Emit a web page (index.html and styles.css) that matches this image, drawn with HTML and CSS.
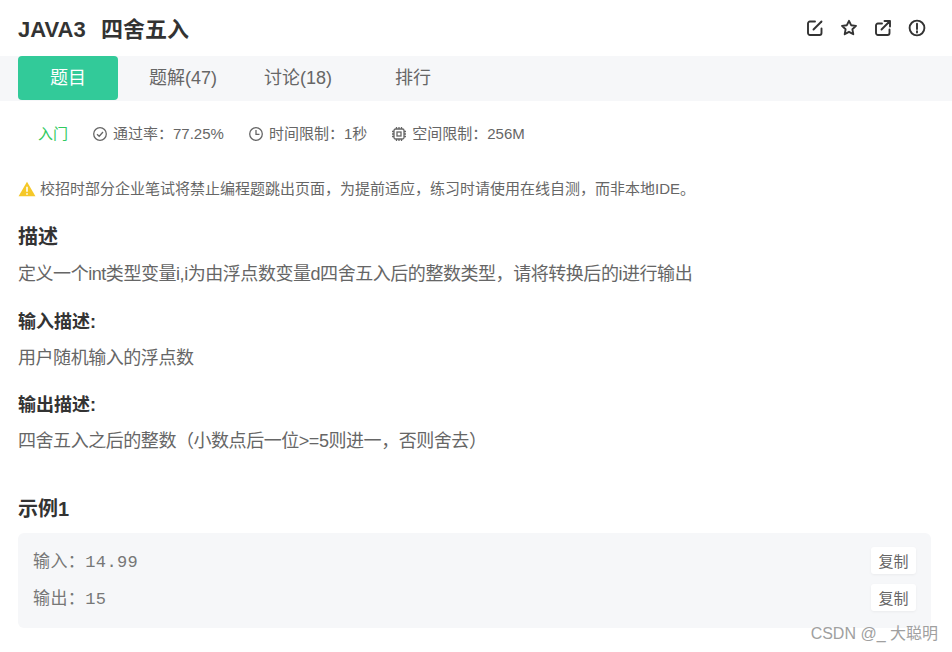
FILE: index.html
```html
<!DOCTYPE html>
<html lang="zh">
<head>
<meta charset="utf-8">
<title>JAVA3 四舍五入</title>
<link rel="stylesheet" href="styles.css">
</head>
<body>
<div class="page">
  <header class="head">
    <h1 class="title">JAVA3&nbsp; 四舍五入</h1>
    <div class="actions">
      <svg class="act" viewBox="0 0 18 18"><path d="M15.5 9.5v4.6a1.9 1.9 0 0 1-1.9 1.9H3.9A1.9 1.9 0 0 1 2 14.100V4.400A1.900 1.900 0 0 1 3.900 2.500H9"/><path d="M7.500 10.500 15.500 2.500"/></svg>
      <svg class="act" viewBox="0 0 18 18"><path d="M9 1.800 11.100 6.200 16 6.900 12.400 10.300 13.300 15.200 9 12.800 4.700 15.200 5.600 10.300 2 6.900 6.900 6.200Z"/></svg>
      <svg class="act" viewBox="0 0 18 18"><path d="M15.500 10.500v3.600a1.900 1.900 0 0 1-1.900 1.900H3.900A1.900 1.900 0 0 1 2 14.100V6.400A1.900 1.900 0 0 1 3.900 4.500H8"/><path d="M7.500 10.500 15.500 2.500M10.500 2H16V7.500"/></svg>
      <svg class="act" viewBox="0 0 18 18"><circle cx="9" cy="9" r="7.400"/><path d="M9 4.700V10M9 12.100V13.500"/></svg>
    </div>
  </header>
  <nav class="tabs">
    <a class="tab tab-on">题目</a>
    <a class="tab">题解(47)</a>
    <a class="tab">讨论(18)</a>
    <a class="tab">排行</a>
  </nav>
  <div class="meta">
    <span class="level">入门</span>
    <span class="stat">
      <svg class="ico" viewBox="0 0 16 16"><circle cx="8" cy="8" r="6.300"/><path d="M5 8.200 7.200 10.300 11 6"/></svg>通过率：77.25%
    </span>
    <span class="stat">
      <svg class="ico" viewBox="0 0 16 16"><circle cx="8" cy="8" r="6.300"/><path d="M8 4V8.300H11.500"/></svg>时间限制：1秒
    </span>
    <span class="stat">
      <svg class="ico" viewBox="0 0 16 16"><rect x="3" y="3" width="10" height="10" rx="1.500"/><rect x="6" y="6" width="4" height="4"/><path d="M5.500 1V3M8 1V3M10.500 1V3M5.500 13V15M8 13V15M10.500 13V15M1 5.500H3M1 8H3M1 10.500H3M13 5.500H15M13 8H15M13 10.500H15"/></svg>空间限制：256M
    </span>
  </div>
  <p class="notice">
    <svg class="warn" viewBox="0 0 16 16"><path d="M8 1.500 15.500 14.500H.5Z" fill="#f5c828"/><path d="M8 6V10.500M8 11.800V13.200" stroke="#fff" stroke-width="1.400"/></svg>校招时部分企业笔试将禁止编程题跳出页面，为提前适应，练习时请使用在线自测，而非本地IDE。
  </p>
  <h2 class="h-main">描述</h2>
  <p class="body">定义一个int类型变量i,i为由浮点数变量d四舍五入后的整数类型，请将转换后的i进行输出</p>
  <h3 class="h-sub">输入描述:</h3>
  <p class="body">用户随机输入的浮点数</p>
  <h3 class="h-sub">输出描述:</h3>
  <p class="body">四舍五入之后的整数（小数点后一位&gt;=5则进一，否则舍去）</p>
  <h2 class="h-example">示例1</h2>
  <div class="example">
    <div class="row"><span class="io">输入：14.99</span><button class="copy">复制</button></div>
    <div class="row"><span class="io">输出：15</span><button class="copy">复制</button></div>
  </div>
  <div class="mark">CSDN @_ 大聪明</div>
</div>
</body>
</html>
```
FILE: styles.css
```css
* { box-sizing: border-box; }
html, body { margin: 0; padding: 0; background: #fff; }
body {
  width: 952px;
  height: 652px;
  overflow: hidden;
  font-family: "Liberation Sans", "Noto Sans CJK SC", sans-serif;
  color: #666;
}
.page { position: relative; height: 652px; }
.head {
  height: 56px;
  padding: 0 26px 0 18px;
  display: flex;
  align-items: center;
  justify-content: space-between;
}
.title { margin: 4px 0 0; font-size: 22px; line-height: 28px; font-weight: 700; color: #333; word-spacing: 1.500px; }
.actions { display: flex; gap: 16px; }
.act { width: 18px; height: 18px; fill: none; stroke: #333; stroke-width: 1.900; stroke-linecap: round; stroke-linejoin: round; }
.tabs { height: 45px; padding: 0 18px; background: #f6f7f9; display: flex; gap: 15px; }
.tab { width: 100px; height: 44px; line-height: 44px; text-align: center; font-size: 18px; color: #666; border-radius: 4px; }
.tab-on { background: #32ca99; color: #fff; }
.meta { height: 66px; padding: 0 0 0 38px; display: flex; align-items: center; font-size: 15px; line-height: 20px; }
.level { color: #32ca5f; margin-right: 24px; }
.stat { display: flex; align-items: center; margin-right: 24px; }
.ico { width: 16px; height: 16px; margin-right: 5px; fill: none; stroke: #666; stroke-width: 1.300; }
.notice { margin: 11px 0 0; padding: 0 0 0 18px; height: 22px; display: flex; align-items: center; font-size: 15px; line-height: 22px; color: #666; }
.warn { width: 18px; height: 18px; margin-right: 4px; flex: none; }
.h-main { margin: 23px 0 0; padding-left: 18px; font-size: 20px; line-height: 28px; color: #333; }
.body { margin: 10px 0 0; padding-left: 18px; font-size: 18px; line-height: 26px; color: #666; letter-spacing: -0.450px; }
.h-sub { margin: 22px 0 0; padding-left: 18px; font-size: 18px; line-height: 26px; font-weight: 700; color: #333; }
.h-sub + .body + .h-sub { margin-top: 21px; }
.h-example { margin: 41px 0 0; padding-left: 18px; font-size: 20px; line-height: 28px; color: #333; }
.example { margin: 10px 21px 0 18px; height: 95px; padding: 13px 15px; background: #f6f7f9; border-radius: 6px; display: flex; flex-direction: column; gap: 9px; }
.row { display: flex; justify-content: space-between; align-items: center; height: 28px; }
.io { font-family: "Liberation Mono", "Noto Sans CJK SC", monospace; font-size: 17px; letter-spacing: .400px; color: #777; margin-top: -2px; }
.copy { width: 45px; height: 27px; padding: 0; border: 0; background: #fff; border-radius: 3px; font: 15px "Liberation Sans", "Noto Sans CJK SC", sans-serif; color: #666; box-shadow: 0 1px 3px rgba(0,0,0,.05); }
.mark { position: absolute; right: 14px; top: 624px; font-size: 16px; line-height: 20px; color: #a0a0a0; }
```
